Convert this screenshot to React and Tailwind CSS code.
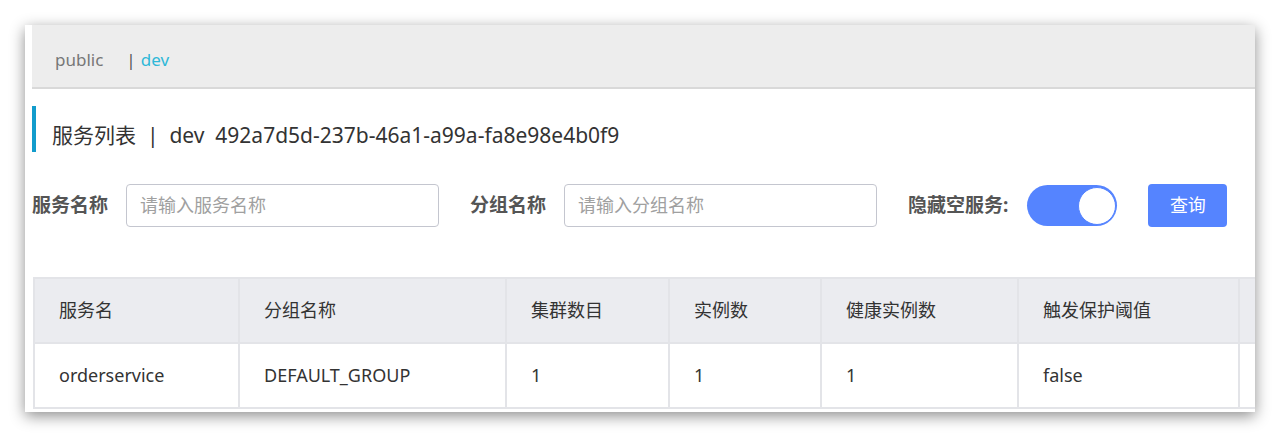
import React from "react";

const FONT = { fontFamily: '"Noto Sans", "Noto Sans CJK SC", sans-serif' };

const cols = [
  { w: 205, h: "服务名", v: "orderservice" },
  { w: 267, h: "分组名称", v: "DEFAULT_GROUP" },
  { w: 163, h: "集群数目", v: "1" },
  { w: 152, h: "实例数", v: "1" },
  { w: 197, h: "健康实例数", v: "1" },
  { w: 221, h: "触发保护阈值", v: "false" },
  { w: 160, h: "", v: "" },
];

export default function App() {
  return (
    <div className="w-[1280px] h-[444px] bg-white overflow-hidden pt-[25px] pl-[25px]" style={FONT}>
      <div className="w-[1230px] h-[387px] bg-white overflow-hidden pl-[7px] shadow-[0_4px_14px_rgba(0,0,0,0.45)]">
        {/* top namespace bar */}
        <div className="h-[64px] bg-[#ededed] border-b-2 border-[#d9d9d9] flex items-center pl-[23px] pt-[8px] text-[17px]">
          <span className="text-[#777]">public</span>
          <span className="ml-[23px] text-[#555]">|</span>
          <span className="ml-[5px] text-[#2fb8d8]">dev</span>
        </div>

        {/* title */}
        <div className="mt-[17px] h-[46px] border-l-4 border-[#129ccc] flex items-center pl-[16px]">
          <span className="text-[21px] text-[#333] pt-[14px] whitespace-nowrap">
            服务列表&nbsp;&nbsp;|&nbsp;&nbsp;dev&nbsp;&nbsp;492a7d5d-237b-46a1-a99a-fa8e98e4b0f9
          </span>
        </div>

        {/* filters */}
        <div className="mt-[32px] h-[43px] flex items-center">
          <span className="text-[19px] font-bold text-[#555] whitespace-nowrap">服务名称</span>
          <div className="ml-[18px] w-[313px] h-[43px] border border-[#c4c6cf] rounded-[4px] flex items-center pl-[13px] text-[18px] text-[#a0a0a0]">
            请输入服务名称
          </div>
          <span className="ml-[31px] text-[19px] font-bold text-[#555] whitespace-nowrap">分组名称</span>
          <div className="ml-[18px] w-[313px] h-[43px] border border-[#c4c6cf] rounded-[4px] flex items-center pl-[13px] text-[18px] text-[#a0a0a0]">
            请输入分组名称
          </div>
          <span className="ml-[31px] text-[19px] font-bold text-[#555] whitespace-nowrap">隐藏空服务:</span>
          <div className="ml-[19px] w-[90px] h-[41px] rounded-full bg-[#5584ff] flex items-center justify-end pr-[1px]">
            <div className="w-[38px] h-[38px] rounded-full bg-white border border-[#5584ff]" />
          </div>
          <div className="ml-[31px] w-[79px] h-[43px] rounded-[4px] bg-[#5584ff] flex items-center justify-center text-white text-[18px]">
            查询
          </div>
        </div>

        {/* table */}
        <div className="mt-[50px] ml-[1px] w-max border-t-2 border-l-2 border-b-2 border-[#e3e4e8] text-[18px] text-[#333]">
          <div className="flex bg-[#ebecf0] border-b-2 border-[#e3e4e8]">
            {cols.map((c, i) => (
              <div
                key={i}
                className="h-[63px] flex items-center pl-[24px] border-r-2 border-[#e3e4e8] whitespace-nowrap"
                style={{ width: c.w }}
              >
                {c.h}
              </div>
            ))}
          </div>
          <div className="flex bg-white">
            {cols.map((c, i) => (
              <div
                key={i}
                className="h-[63px] flex items-center pl-[24px] border-r-2 border-[#e3e4e8] whitespace-nowrap"
                style={{ width: c.w }}
              >
                {c.v}
              </div>
            ))}
          </div>
        </div>
      </div>
    </div>
  );
}
